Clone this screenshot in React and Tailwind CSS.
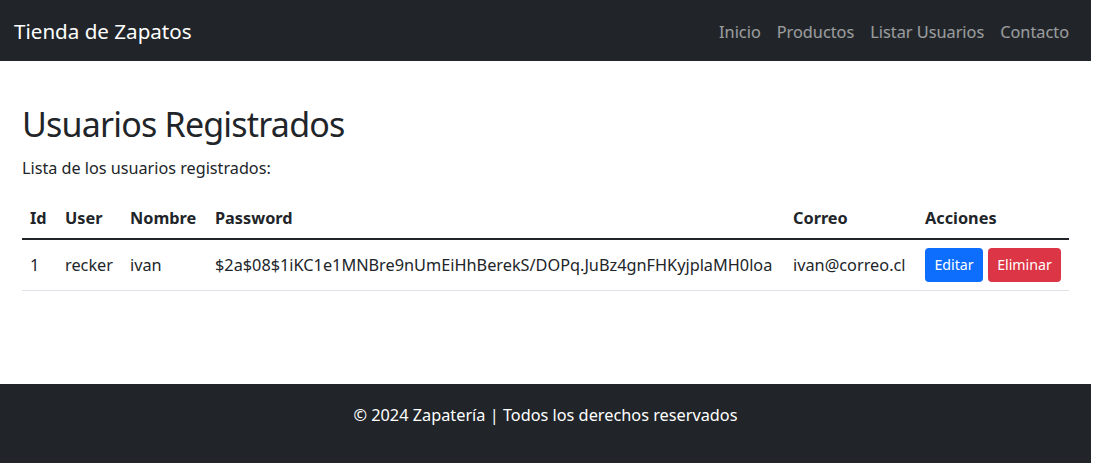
import React from "react";

const users = [
  {
    id: 1,
    user: "recker",
    nombre: "ivan",
    password: "$2a$08$1iKC1e1MNBre9nUmEiHhBerekS/DOPq.JuBz4gnFHKyjplaMH0loa",
    correo: "ivan@correo.cl",
  },
];

const links = ["Inicio", "Productos", "Listar Usuarios", "Contacto"];

export default function App() {
  return (
    <div className="w-[1091px] min-h-[463px] flex flex-col bg-white text-[#212529] font-['Noto_Sans',sans-serif]">
      <nav className="h-[61px] bg-[#212529] flex items-center justify-between pl-[14px] pr-[14px]">
        <span className="text-[20.6px] text-white pt-[2px]">Tienda de Zapatos</span>
        <ul className="flex items-center pt-[3px]">
          {links.map((l) => (
            <li key={l}>
              <a href="#" className="block px-2 py-2 text-[16.3px] text-white/55">
                {l}
              </a>
            </li>
          ))}
        </ul>
      </nav>

      <main className="px-[22px] pt-[43px] pb-[93px]">
        <h1 className="text-[34px] leading-[1.2] tracking-[-0.8px] mb-[11px]">Usuarios Registrados</h1>
        <p className="text-[16.2px] leading-[24px] mb-[18px]">Lista de los usuarios registrados:</p>
        <table className="w-full table-fixed text-[16.3px] leading-[24px] border-collapse">
          <colgroup>
            <col className="w-[35px]" />
            <col className="w-[65px]" />
            <col className="w-[85px]" />
            <col className="w-[578px]" />
            <col className="w-[132px]" />
            <col />
          </colgroup>
          <thead>
            <tr className="border-b-2 border-[#212529]">
              {["Id", "User", "Nombre", "Password", "Correo", "Acciones"].map((h) => (
                <th key={h} className="text-left font-bold px-2 py-2">
                  {h}
                </th>
              ))}
            </tr>
          </thead>
          <tbody>
            {users.map((u) => (
              <tr key={u.id} className="border-b border-[#dee2e6]">
                <td className="px-2 py-2">{u.id}</td>
                <td className="px-2 py-2">{u.user}</td>
                <td className="px-2 py-2">{u.nombre}</td>
                <td className="px-2 py-2 whitespace-nowrap">{u.password}</td>
                <td className="px-2 py-2">{u.correo}</td>
                <td className="px-2 py-2">
                  <div className="flex gap-[5px]">
                    <button className="h-[34px] w-[58px] rounded-[4px] bg-[#0d6efd] text-white text-[14.2px]">
                      Editar
                    </button>
                    <button className="h-[34px] w-[73px] rounded-[4px] bg-[#dc3545] text-white text-[14.2px]">
                      Eliminar
                    </button>
                  </div>
                </td>
              </tr>
            ))}
          </tbody>
        </table>
      </main>

      <footer className="flex-1 bg-[#212529] text-white flex justify-center pt-[19px] pb-[24px]">
        <p className="text-[16.3px] leading-[24px]">© 2024 Zapatería | Todos los derechos reservados</p>
      </footer>
    </div>
  );
}
